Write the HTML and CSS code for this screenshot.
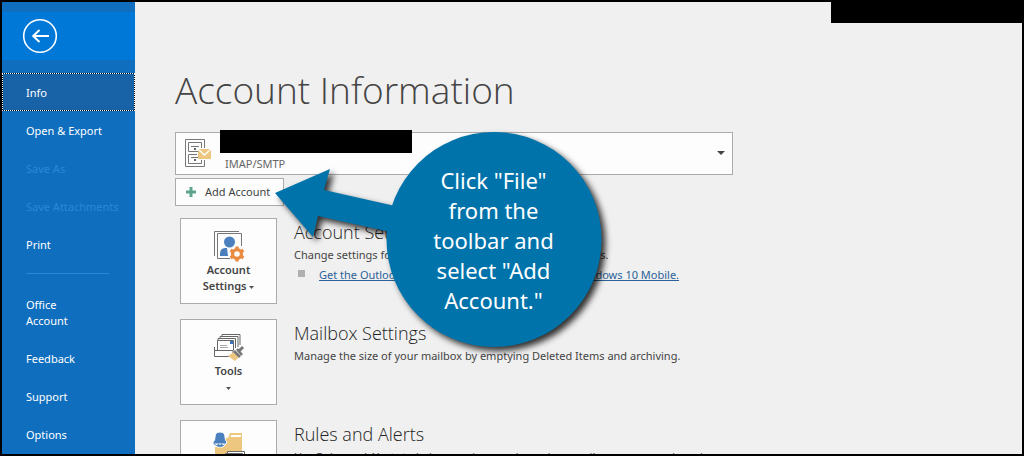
FILE: index.html
```
<!DOCTYPE html>
<html lang="en">
<head>
  <meta charset="UTF-8">
  <meta name="viewport" content="width=device-width, initial-scale=1.0">
  <title>Account Information</title>
  <link rel="stylesheet" href="styles.css">
</head>
<body>
  <div class="window">
    <nav class="sidebar">
      <div class="back-bar">
        <button class="back" type="button" aria-label="Back">
          <svg width="36" height="36" viewBox="0 0 36 36" fill="none" stroke="#fff">
            <circle cx="18" cy="18" r="16.3" stroke-width="1.6"/>
            <path d="M27 18H11M17.5 12L11.2 18l6.3 6" stroke-width="2"/>
          </svg>
        </button>
      </div>
      <a class="nav-item active" href="#info">Info</a>
      <a class="nav-item" href="#open">Open &amp; Export</a>
      <a class="nav-item disabled" href="#save" aria-disabled="true">Save As</a>
      <a class="nav-item disabled" href="#attachments" aria-disabled="true">Save Attachments</a>
      <a class="nav-item" href="#print">Print</a>
      <hr class="nav-line">
      <a class="nav-item" href="#account">Office<br>Account</a>
      <a class="nav-item" href="#feedback">Feedback</a>
      <a class="nav-item" href="#support">Support</a>
      <a class="nav-item" href="#options">Options</a>
    </nav>

    <main class="content">
      <h1>Account Information</h1>

      <div class="account-box">
        <select class="account-select" aria-label="Account">
          <option>IMAP/SMTP</option>
        </select>
        <svg class="cabinet" width="28" height="30" viewBox="0 0 28 30" fill="none">
          <path d="M20.5 10V1.500h-19v27h19V22" stroke="#777"/>
          <path d="M14 13.500H4.500v-9h13V10M13 16.500H4.500v9h13V22" stroke="#777"/>
          <path d="M7 8.500h8M7 19.500h8" stroke="#777"/>
          <path d="M10 10h2v2h-2zM10 21h2v2h-2z" fill="#666"/>
          <path d="M14 11h13v10H14z" fill="#edc77f"/>
          <path d="M14 11l6.500 6 6.500-6" stroke="#fff" stroke-width="1.3"/>
        </svg>
        <svg class="select-arrow" width="8" height="4" viewBox="0 0 8 4"><path d="M0 0h8L4 4z" fill="#444"/></svg>
        <span class="redacted-name"></span>
      </div>

      <button class="add-account" type="button">
        <svg width="10" height="10" viewBox="0 0 10 10"><path d="M3.500 0h3v3.500H10v3H6.500V10h-3V6.500H0v-3h3.500z" fill="#5fa58c"/></svg>
        Add Account
      </button>

      <section class="row">
        <button class="tile" type="button">
          <svg width="32" height="32" viewBox="0 0 32 32" fill="none">
            <path d="M1.500 26V1.500H26" stroke="#777"/>
            <path d="M17 28.500H4.500v-25h24V16" stroke="#777"/>
            <circle cx="16.500" cy="12" r="5.500" fill="#4a80bd"/>
            <path d="M7 26v-2q0-6 5-6h2l1 8z" fill="#4a80bd"/>
            <g stroke="#e98b40">
              <circle cx="24" cy="24" r="4.400" stroke-width="3.200"/>
              <path d="M24 16.500v3M24 28.500v3M17.500 20.300l2.600 1.500M27.900 26.200l2.600 1.500M17.500 27.700l2.600-1.500M27.900 21.800l2.600-1.500" stroke-width="3.400"/>
            </g>
          </svg>
          <span>Account<br>Settings <svg class="caret" width="5" height="3" viewBox="0 0 5 3"><path d="M0 0h5L2.500 3z" fill="#555"/></svg></span>
        </button>
        <div class="info">
          <h2>Account Settings</h2>
          <p>Change settings for this account or set up more connections.</p>
          <ul>
            <li><a href="#mobile">Get the Outlook app for iPhone, iPad, Android, or Windows 10 Mobile.</a></li>
          </ul>
        </div>
      </section>

      <section class="row">
        <button class="tile" type="button">
          <svg width="32" height="32" viewBox="0 0 32 32" fill="none">
            <path d="M9 5V3.500h18V14M7 7V5.500h18V16M5 9V7.500h17.500V17" stroke="#666"/>
            <path d="M4.500 19V9.500h16V19" fill="#fff" stroke="#666"/>
            <path d="M17 10h3v3h-3z" fill="#3d75bd"/>
            <path d="M7 14.500h7M7 16.500h8" stroke="#aaa"/>
            <path d="M1.500 16v9.500H16M1.500 19.500H20M20 19v3" stroke="#666"/>
            <path d="M15 25l6-4 5 5-4 4z" fill="#edc77f"/>
            <path d="M21 20l6 6M24 18l5 6" stroke="#777" stroke-width="2.600"/>
            <path d="M25 21l5-5" stroke="#777" stroke-width="3"/>
          </svg>
          <span>Tools<br><svg class="caret" width="5" height="3" viewBox="0 0 5 3"><path d="M0 0h5L2.500 3z" fill="#555"/></svg></span>
        </button>
        <div class="info">
          <h2>Mailbox Settings</h2>
          <p>Manage the size of your mailbox by emptying Deleted Items and archiving.</p>
        </div>
      </section>

      <section class="row">
        <button class="tile" type="button">
          <svg class="bell-folder" width="32" height="32" viewBox="0 0 32 32" fill="none">
            <path d="M2 15h9V6h4l2-5h12v28H2z" fill="#edc77f"/>
            <path d="M17 5l1.500-2H28v2z" fill="#fff"/>
            <path d="M0 10q2-1 2-5 0-5 5-5t5 5q0 4 2 5l-1 2-3 3H4l-4-3z" fill="#4a80bd" stroke="#fdfdfd"/>
            <path d="M1 11.500h12l-3 2H4z" fill="#fff"/>
            <path d="M4.500 12.500q2.500 2.500 5 0" stroke="#4a80bd" stroke-width="2"/>
            <path d="M14.500 30V19.500h17V30" fill="#fff" stroke="#666"/>
            <path d="M12.500 30v-8.500h17V30" fill="#fff" stroke="#666"/>
          </svg>
          <span>Manage Rules<br>&amp; Alerts</span>
        </button>
        <div class="info">
          <h2>Rules and Alerts</h2>
          <p>Use Rules and Alerts to help organize your incoming email messages, and receive updates when items are added, changed, or removed.</p>
        </div>
      </section>
    </main>

    <span class="redacted-title"></span>

    <!-- help bubble with arrow, floats over the page -->
    <div class="callout">
      <svg class="callout-shape" width="340" height="230" viewBox="0 0 340 230" fill="#0173ab">
        <path d="M1 62L56 38 50 59 130 77V104L44 85 39 106z"/>
        <circle cx="220" cy="108.500" r="107.500"/>
      </svg>
      <p>Click "File"<br>from the<br>toolbar and<br>select "Add<br>Account."</p>
    </div>
  </div>
</body>
</html>
```
FILE: styles.css
```
* {
  box-sizing: border-box;
}
body {
  margin: 0;
  font-family: "Noto Sans", "Open Sans", sans-serif;
  font-size: 11px;
  line-height: 16px;
  color: #444;
}
button,
select {
  font: inherit;
  color: inherit;
}
.window {
  position: relative;
  display: flex;
  height: 100vh;
  border: 2px solid #000;
  background: #f0f0f0;
  overflow: hidden;
}

/* sidebar */
.sidebar {
  flex: 0 0 133px;
  min-width: 0;
  padding-top: 10px;
  background: #106ebe;
}
.back-bar {
  height: 48px;
  margin-bottom: 13px;
  padding: 6px 20px;
  background: #0078d7;
}
.back {
  display: block;
  padding: 0;
  border: none;
  background: none;
  cursor: pointer;
}
.back svg {
  display: block;
}
.nav-item {
  display: block;
  padding: 12px 0 10px 24px;
  color: #fff;
  text-decoration: none;
  white-space: nowrap;
}
.nav-item.active {
  background: #1863a8;
  outline: 1px dotted #fff;
  outline-offset: -1px;
  box-shadow: inset 0 0 0 1px #000;
}
.nav-item.disabled {
  color: #2b88d8;
}
.nav-line {
  height: 1px;
  margin: 10px 26px 11px 24px;
  border: none;
  background: #2b88d8;
}

/* main area */
.content {
  flex: 1;
  padding: 60px 40px 0;
}
h1 {
  margin: 0 0 14px;
  font-family: "Open Sans", sans-serif;
  font-size: 37px;
  line-height: 56px;
  font-weight: 300;
}
.account-box {
  position: relative;
  max-width: 558px;
  height: 43px;
  margin-bottom: 3px;
}
.account-select {
  width: 100%;
  height: 100%;
  padding: 20px 24px 0 49px;
  border: 1px solid #ababab;
  border-radius: 0;
  background: #fdfdfd;
  color: #666;
  appearance: none;
}
.cabinet {
  position: absolute;
  left: 9px;
  top: 6px;
  pointer-events: none;
}
.select-arrow {
  position: absolute;
  right: 8px;
  top: 19px;
  pointer-events: none;
}
.redacted-name {
  position: absolute;
  left: 45px;
  top: -2px;
  width: 192px;
  height: 23px;
  background: #000;
}
.add-account {
  display: flex;
  align-items: center;
  gap: 9px;
  min-width: 109px;
  height: 28px;
  margin-bottom: 12px;
  padding: 0 8px 0 10px;
  border: 1px solid #ababab;
  background: #fdfdfd;
  white-space: nowrap;
}
.row {
  display: flex;
  gap: 17px;
  margin: 0 0 15px 5px;
}
.tile {
  display: flex;
  flex: 0 0 97px;
  flex-direction: column;
  align-items: center;
  height: 86px;
  padding: 11px 0 0;
  border: 1px solid #ababab;
  background: #fdfdfd;
  font-weight: 600;
  white-space: nowrap;
}
.bell-folder {
  overflow: visible;
}
.caret {
  vertical-align: middle;
}
h2 {
  margin: 2px 0 3px;
  font-family: "Open Sans", sans-serif;
  font-size: 18px;
  line-height: 24px;
  font-weight: 300;
  color: #222;
}
.info p {
  max-width: 440px;
  margin: 0;
}
.info ul {
  margin: 4px 0 0;
  padding: 0;
  list-style: none;
}
.info li {
  display: flex;
  gap: 14px;
}
.info li::before {
  content: "";
  width: 7px;
  height: 7px;
  margin: 3px 0 0 4px;
  background: #b0b0b0;
}
.info a {
  color: #2b6299;
}

/* overlays */
.redacted-title {
  position: absolute;
  top: 0;
  right: 0;
  width: 191px;
  height: 21px;
  background: #000;
}
.callout {
  position: absolute;
  left: 272px;
  top: 129px;
}
.callout-shape {
  display: block;
  overflow: visible;
  filter: drop-shadow(4px 4px 3px rgba(0, 0, 0, 0.8));
}
.callout p {
  position: absolute;
  left: 112px;
  top: 34px;
  width: 215px;
  margin: 0;
  color: #fff;
  font-size: 22px;
  line-height: 30px;
  text-align: center;
}
```
